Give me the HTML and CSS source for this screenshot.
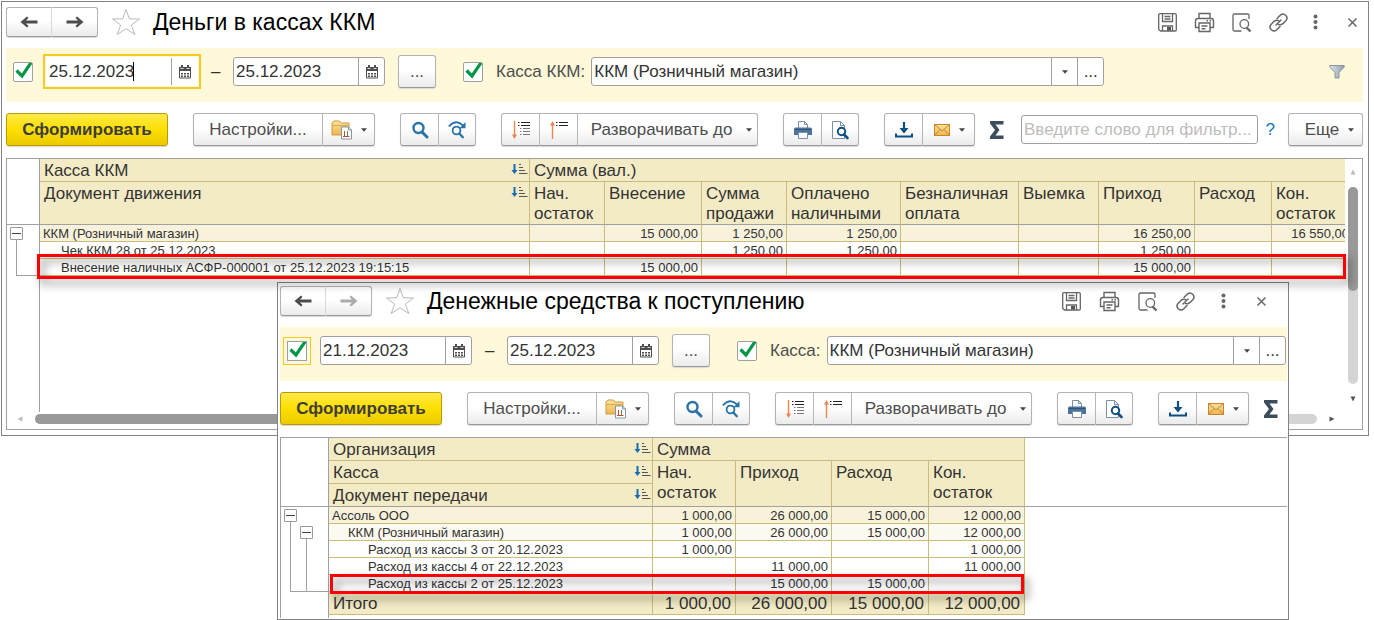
FILE: index.html
```html
<!DOCTYPE html>
<html lang="ru">
<head>
<meta charset="utf-8">
<title>Деньги в кассах ККМ</title>
<link rel="stylesheet" href="styles.css">
</head>
<body>
<svg class="sprite" aria-hidden="true">
  <defs>
    <linearGradient id="gold" x1="0" y1="0" x2="0" y2="1"><stop offset="0" stop-color="#fbe3a0"/><stop offset="1" stop-color="#eeb64c"/></linearGradient>
    <linearGradient id="steel" x1="0" y1="0" x2="1" y2="0"><stop offset="0" stop-color="#dfe5ea"/><stop offset="1" stop-color="#8f9dab"/></linearGradient>
  </defs>
  <symbol id="back" viewBox="0 0 18 12"><path d="M.5 6L7 .5L8.500 2L6 4.500H17.500V7.500H6L8.500 10L7 11.500Z" fill="currentColor"/></symbol>
  <symbol id="forward" viewBox="0 0 18 12"><path d="M17.500 6L11 .5L9.500 2L12 4.500H.5V7.500H12L9.500 10L11 11.500Z" fill="currentColor"/></symbol>
  <symbol id="star" viewBox="0 0 30 28"><path d="M15 1.500L18.300 10.800L28.500 11L20.300 17L23.800 26.500L15 20.800L6.200 26.500L9.700 17L1.500 11L11.700 10.800Z" fill="#fff" stroke="#b4bac0"/></symbol>
  <symbol id="save" viewBox="0 0 21 21"><g fill="none" stroke="#666" stroke-width="1.300"><path d="M1.700 3Q1.700 1.700 3 1.700H18Q19.300 1.700 19.300 3V18Q19.300 19 18 19H3.500L1.700 17.500Z"/><path d="M5.500 2V9.500H15.500V2M7.500 4.500H13.500M7.500 7H13.500M5.500 19V14H15.500V19"/></g><path d="M10 15H14V18.500H10Z" fill="#555"/></symbol>
  <symbol id="print" viewBox="0 0 21 21"><g fill="none" stroke="#666" stroke-width="1.400"><path d="M5 6V1.500H16V6"/><path d="M5 15.500H1.500V9Q1.500 6.500 4 6.500H17Q19.500 6.500 19.500 9V15.500H16"/><path d="M5 11H16V19.500H5ZM7.500 14H13.500M7.500 16.800H11.500M12.500 8.700H14M15.500 8.700H17"/></g></symbol>
  <symbol id="preview" viewBox="0 0 21 21"><g fill="none" stroke="#666" stroke-width="1.300"><path d="M18 7V3.500Q18 2 16.500 2H3.500Q2 2 2 3.500V17.500Q2 19 3.500 19H10.500"/><circle cx="13.300" cy="12" r="4.300"/><path d="M15.500 15.500L19.500 19.500" stroke-width="2.400"/></g></symbol>
  <symbol id="link" viewBox="0 0 21 21"><g fill="none" stroke="#666" stroke-width="1.500" stroke-linecap="round"><path d="M9 6.500L12.500 3Q15 .8 17.700 3.300Q20.200 6 18 8.500L14.800 11.700Q12.500 13.500 10.300 12.300"/><path d="M12 14.500L8.500 18Q6 20.200 3.300 17.700Q.8 15 3 12.500L6.200 9.300Q8.500 7.500 10.700 8.700"/><path d="M8 13L13 8"/></g></symbol>
  <symbol id="dots" viewBox="0 0 21 21"><g fill="#666"><circle cx="10.500" cy="4.500" r="2"/><circle cx="10.500" cy="10" r="2"/><circle cx="10.500" cy="15.500" r="2"/></g></symbol>
  <symbol id="close" viewBox="0 0 21 21"><path d="M6.500 6.500L14.500 14.500M14.500 6.500L6.500 14.500" stroke="#666" stroke-width="1.500"/></symbol>
  <symbol id="calendar" viewBox="0 0 14 14"><path d="M1.500 3H12.500V13H1.500Z" fill="#fff" stroke="#4d4d4d"/><path d="M1 2H13V6H1Z" fill="#4d4d4d"/><path d="M3 0H5V3H3ZM9 0H11V3H9Z" fill="#4d4d4d"/><path d="M2.500 3.500H5.500M8.500 3.500H11.500" stroke="#ddd"/><path d="M3 8H5V9.500H3ZM6 8H8V9.500H6ZM9 8H11V9.500H9ZM3 10.500H5V12H3ZM6 10.500H8V12H6ZM9 10.500H11V12H9Z" fill="#4d4d4d"/></symbol>
  <symbol id="funnel" viewBox="0 0 16 16"><path d="M.8 1.500H15.200V3L10 8.500V14H6V8.500L.8 3Z" fill="url(#steel)" stroke="#8794a1"/></symbol>
  <symbol id="folder" viewBox="0 0 22 20"><path d="M1 15V3L3 1H8.500L10 3H18V15Z" fill="url(#gold)" stroke="#cf9a3b"/><path d="M1.500 5.500H17.500" stroke="#dba94d"/><path d="M10.500 7H17.500L20.500 10V19H10.500Z" fill="#fff" stroke="#8795a5"/><path d="M17.500 7V10H20.500" fill="none" stroke="#8795a5"/><path d="M13.500 11V16.500" stroke="#cf4632"/><path d="M16.500 11V16.500" stroke="#3f9a55"/><path d="M12 16.500H18.500" stroke="#cf4632"/></symbol>
  <symbol id="search" viewBox="0 0 18 18"><circle cx="7.500" cy="7" r="5" fill="none" stroke="#2a72a8" stroke-width="2.400"/><path d="M11 11L16 16" stroke="#2a72a8" stroke-width="3" stroke-linecap="round"/></symbol>
  <symbol id="research" viewBox="0 0 18 18"><path d="M.8 5.500Q8 -2.500 15 4.500" fill="none" stroke="#2a72a8" stroke-width="1.800"/><path d="M17.500 1V7.200H11.500Z" fill="#2a72a8"/><circle cx="8.500" cy="9.500" r="3.900" fill="none" stroke="#2a72a8" stroke-width="1.800"/><path d="M11.300 12.500L14.800 16.200" stroke="#2a72a8" stroke-width="2.400" stroke-linecap="round"/></symbol>
  <symbol id="expand" viewBox="0 0 20 20"><path d="M3.500 1V17" stroke="#f08452" stroke-width="1.400"/><path d="M1 14.500H6L3.500 19Z" fill="#f08452"/><path d="M7 2.500H8.500M10 2.500H19M7 5.500H8.500M10 5.500H19" stroke="#222"/><path d="M9 8.500H10.500M12 8.500H19M9 11.500H10.500M12 11.500H19M9 14.500H10.500M12 14.500H19" stroke="#777"/></symbol>
  <symbol id="collapse" viewBox="0 0 20 20"><path d="M3.500 3V19" stroke="#f08452" stroke-width="1.400"/><path d="M1 5.500H6L3.500 1Z" fill="#f08452"/><path d="M7 2.500H8.500M10 2.500H19M7 5.500H8.500M10 5.500H19" stroke="#222"/></symbol>
  <symbol id="printer" viewBox="0 0 20 20"><path d="M5.500 8V1.500H11.500L14.500 4.500V8" fill="#fff" stroke="#7b8fa5"/><path d="M11.500 1.500V4.500H14.500" fill="none" stroke="#7b8fa5"/><path d="M2.500 7.500H17.500Q19 7.500 19 9V15H1V9Q1 7.500 2.500 7.500Z" fill="#4c739c"/><path d="M2 9.500H18" stroke="#2f5379"/><path d="M5.500 12.500H14.500V18.500H5.500Z" fill="#fff" stroke="#7b8fa5"/></symbol>
  <symbol id="lookup" viewBox="0 0 20 20"><path d="M2.500 1.500H10.500L14.500 5.500V18.500H2.500Z" fill="#fff" stroke="#7b8fa5"/><path d="M10.500 1.500V5.500H14.500" fill="none" stroke="#7b8fa5"/><circle cx="11.500" cy="11.500" r="3.700" fill="#fff" stroke="#0d5083" stroke-width="2"/><path d="M14 14.500L17.500 18" stroke="#0d5083" stroke-width="2.600" stroke-linecap="round"/></symbol>
  <symbol id="download" viewBox="0 0 20 18"><path d="M10 1V10" stroke="#0d4f82" stroke-width="2.200"/><path d="M5.500 7L10 12.500L14.500 7Z" fill="#0d4f82"/><path d="M2 12.500V15.500H18V12.500" fill="none" stroke="#0d4f82" stroke-width="2"/></symbol>
  <symbol id="mail" viewBox="0 0 18 14"><rect x="1.500" y="1.500" width="15" height="11" fill="url(#gold)" stroke="#c9862a"/><path d="M1.500 1.500L9 8L16.500 1.500M1.500 12.500L7 6.500M16.500 12.500L11 6.500" fill="none" stroke="#c9862a"/></symbol>
  <symbol id="sigma" viewBox="0 0 18 20"><path d="M2 1H15.500V4.500H7.500L11.500 10L7.500 15.500H15.500V19H2V16.500L7 10L2 3.500Z" fill="#3c4d5c"/></symbol>
  <symbol id="caret" viewBox="0 0 7 4"><path d="M0 0H7L3.500 4Z" fill="#444"/></symbol>
  <symbol id="sort" viewBox="0 0 17 12"><path d="M3.500 0V7" stroke="#176db4" stroke-width="2"/><path d="M.5 6H6.500L3.500 10Z" fill="#176db4"/><path d="M8 .5H10M8 3.500H12M8 6.500H14M8 9.500H16.500" stroke="#555"/></symbol>
  <symbol id="triangle" viewBox="0 0 6 6"><path d="M3 .5L5.500 5.500H.5Z" fill="currentColor"/></symbol>
</svg>

<main class="desktop">
<section class="window window-cash" aria-label="Деньги в кассах ККМ">
  <header class="titlebar">
    <div class="group nav">
      <button class="btn" aria-label="Назад"><svg class="i-arrow"><use href="#back"/></svg></button>
      <button class="btn" aria-label="Вперед"><svg class="i-arrow"><use href="#forward"/></svg></button>
    </div>
    <button class="plain star" aria-label="В избранное"><svg class="i-star"><use href="#star"/></svg></button>
    <h1>Деньги в кассах ККМ</h1>
    <div class="window-tools">
      <button class="plain" aria-label="Сохранить"><svg><use href="#save"/></svg></button>
      <button class="plain" aria-label="Печать"><svg><use href="#print"/></svg></button>
      <button class="plain" aria-label="Просмотр"><svg><use href="#preview"/></svg></button>
      <button class="plain" aria-label="Ссылка"><svg><use href="#link"/></svg></button>
      <button class="plain" aria-label="Меню"><svg><use href="#dots"/></svg></button>
      <button class="plain" aria-label="Закрыть"><svg><use href="#close"/></svg></button>
    </div>
  </header>

  <form class="filters">
    <input type="checkbox" class="check" checked aria-label="Период">
    <div class="field date focused">
      <input type="text" value="25.12.2023" aria-label="Начало периода"><i class="text-caret"></i>
      <button type="button" aria-label="Календарь"><svg class="i-cal"><use href="#calendar"/></svg></button>
    </div>
    <span class="dash">–</span>
    <div class="field date">
      <input type="text" value="25.12.2023" aria-label="Конец периода">
      <button type="button" aria-label="Календарь"><svg class="i-cal"><use href="#calendar"/></svg></button>
    </div>
    <button type="button" class="btn period">...</button>
    <input type="checkbox" class="check second" id="use-cash" checked>
    <label for="use-cash">Касса ККМ:</label>
    <div class="field combo">
      <select aria-label="Касса ККМ"><option>ККМ (Розничный магазин)</option></select>
      <span class="drop"><svg class="i-caret"><use href="#caret"/></svg></span>
      <button type="button">...</button>
    </div>
    <button type="button" class="plain funnel" aria-label="Отбор"><svg><use href="#funnel"/></svg></button>
  </form>

  <div class="toolbar">
    <button class="btn primary">Сформировать</button>
    <div class="group">
      <button class="btn settings">Настройки...</button>
      <button class="btn split" aria-label="Варианты"><svg class="i-folder"><use href="#folder"/></svg><svg class="i-caret"><use href="#caret"/></svg></button>
    </div>
    <div class="group">
      <button class="btn icon" aria-label="Найти"><svg class="i-18"><use href="#search"/></svg></button>
      <button class="btn icon" aria-label="Найти далее"><svg class="i-18"><use href="#research"/></svg></button>
    </div>
    <div class="group">
      <button class="btn icon" aria-label="Развернуть"><svg class="i-20"><use href="#expand"/></svg></button>
      <button class="btn icon" aria-label="Свернуть"><svg class="i-20"><use href="#collapse"/></svg></button>
      <button class="btn unfold">Разворачивать до<svg class="i-caret"><use href="#caret"/></svg></button>
    </div>
    <div class="group">
      <button class="btn icon" aria-label="Печать"><svg class="i-20"><use href="#printer"/></svg></button>
      <button class="btn icon" aria-label="Предварительный просмотр"><svg class="i-20"><use href="#lookup"/></svg></button>
    </div>
    <div class="group">
      <button class="btn icon" aria-label="Сохранить"><svg class="i-20"><use href="#download"/></svg></button>
      <button class="btn split" aria-label="Отправить"><svg class="i-18"><use href="#mail"/></svg><svg class="i-caret"><use href="#caret"/></svg></button>
    </div>
    <div class="tail">
      <button class="plain" aria-label="Сумма"><svg class="i-sigma"><use href="#sigma"/></svg></button>
      <input type="text" class="search" placeholder="Введите слово для фильтр..." aria-label="Фильтр">
      <a class="help" href="#">?</a>
      <button class="btn more">Еще<svg class="i-caret"><use href="#caret"/></svg></button>
    </div>
  </div>

  <div class="report">
    <div class="sheet">
      <div class="gutter">
        <div class="gutter-head"></div>
        <div class="node"><button class="toggle" aria-label="Свернуть группу"></button><div class="stem"></div></div>
      </div>
      <div class="clip">
        <table>
          <colgroup><col><col class="w75"><col class="w97"><col class="w85"><col class="w114"><col class="w118"><col class="w80"><col class="w96"><col class="w77"><col class="w81"></colgroup>
          <thead>
            <tr class="one"><th><span class="sortable">Касса ККМ<svg class="i-sort"><use href="#sort"/></svg></span></th><th colspan="9">Сумма (вал.)</th></tr>
            <tr class="two"><th><span class="sortable">Документ движения<svg class="i-sort"><use href="#sort"/></svg></span></th><th>Нач.<br>остаток</th><th>Внесение</th><th>Сумма<br>продажи</th><th>Оплачено<br>наличными</th><th>Безналичная<br>оплата</th><th>Выемка</th><th>Приход</th><th>Расход</th><th>Кон.<br>остаток</th></tr>
          </thead>
          <tbody>
            <tr class="level1"><td>ККМ (Розничный магазин)</td><td></td><td>15 000,00</td><td>1 250,00</td><td>1 250,00</td><td></td><td></td><td>16 250,00</td><td></td><td>16 550,00</td></tr>
            <tr><td class="indent1">Чек ККМ 28 от 25.12.2023</td><td></td><td></td><td>1 250,00</td><td>1 250,00</td><td></td><td></td><td>1 250,00</td><td></td><td></td></tr>
            <tr><td class="indent1">Внесение наличных АСФР-000001 от 25.12.2023 19:15:15</td><td></td><td>15 000,00</td><td></td><td></td><td></td><td></td><td>15 000,00</td><td></td><td></td></tr>
          </tbody>
        </table>
      </div>
    </div>
    <div class="vscroll"><svg class="tri pale"><use href="#triangle"/></svg><div class="track"><div class="thumb"></div></div><svg class="tri down"><use href="#triangle"/></svg></div>
    <div class="hscroll"><svg class="tri left pale"><use href="#triangle"/></svg><div class="track"><div class="thumb"></div></div><svg class="tri right"><use href="#triangle"/></svg></div>
    <div class="mark"></div>
  </div>
</section>

<section class="window window-due" aria-label="Денежные средства к поступлению">
  <header class="titlebar">
    <div class="group nav">
      <button class="btn" aria-label="Назад"><svg class="i-arrow"><use href="#back"/></svg></button>
      <button class="btn" aria-label="Вперед" disabled><svg class="i-arrow"><use href="#forward"/></svg></button>
    </div>
    <button class="plain star" aria-label="В избранное"><svg class="i-star"><use href="#star"/></svg></button>
    <h1>Денежные средства к поступлению</h1>
    <div class="window-tools">
      <button class="plain" aria-label="Сохранить"><svg><use href="#save"/></svg></button>
      <button class="plain" aria-label="Печать"><svg><use href="#print"/></svg></button>
      <button class="plain" aria-label="Просмотр"><svg><use href="#preview"/></svg></button>
      <button class="plain" aria-label="Ссылка"><svg><use href="#link"/></svg></button>
      <button class="plain" aria-label="Меню"><svg><use href="#dots"/></svg></button>
      <button class="plain" aria-label="Закрыть"><svg><use href="#close"/></svg></button>
    </div>
  </header>

  <form class="filters">
    <input type="checkbox" class="check ringed" checked aria-label="Период">
    <div class="field date">
      <input type="text" value="21.12.2023" aria-label="Начало периода">
      <button type="button" aria-label="Календарь"><svg class="i-cal"><use href="#calendar"/></svg></button>
    </div>
    <span class="dash">–</span>
    <div class="field date">
      <input type="text" value="25.12.2023" aria-label="Конец периода">
      <button type="button" aria-label="Календарь"><svg class="i-cal"><use href="#calendar"/></svg></button>
    </div>
    <button type="button" class="btn period">...</button>
    <input type="checkbox" class="check second" id="use-due" checked>
    <label for="use-due">Касса:</label>
    <div class="field combo">
      <select aria-label="Касса"><option>ККМ (Розничный магазин)</option></select>
      <span class="drop"><svg class="i-caret"><use href="#caret"/></svg></span>
      <button type="button">...</button>
    </div>
  </form>

  <div class="toolbar">
    <button class="btn primary">Сформировать</button>
    <div class="group">
      <button class="btn settings">Настройки...</button>
      <button class="btn split" aria-label="Варианты"><svg class="i-folder"><use href="#folder"/></svg><svg class="i-caret"><use href="#caret"/></svg></button>
    </div>
    <div class="group">
      <button class="btn icon" aria-label="Найти"><svg class="i-18"><use href="#search"/></svg></button>
      <button class="btn icon" aria-label="Найти далее"><svg class="i-18"><use href="#research"/></svg></button>
    </div>
    <div class="group">
      <button class="btn icon" aria-label="Развернуть"><svg class="i-20"><use href="#expand"/></svg></button>
      <button class="btn icon" aria-label="Свернуть"><svg class="i-20"><use href="#collapse"/></svg></button>
      <button class="btn unfold">Разворачивать до<svg class="i-caret"><use href="#caret"/></svg></button>
    </div>
    <div class="group">
      <button class="btn icon" aria-label="Печать"><svg class="i-20"><use href="#printer"/></svg></button>
      <button class="btn icon" aria-label="Предварительный просмотр"><svg class="i-20"><use href="#lookup"/></svg></button>
    </div>
    <div class="group">
      <button class="btn icon" aria-label="Сохранить"><svg class="i-20"><use href="#download"/></svg></button>
      <button class="btn split" aria-label="Отправить"><svg class="i-18"><use href="#mail"/></svg><svg class="i-caret"><use href="#caret"/></svg></button>
    </div>
    <div class="tail">
      <button class="plain" aria-label="Сумма"><svg class="i-sigma"><use href="#sigma"/></svg></button>
    </div>
  </div>

  <div class="report">
    <div class="sheet">
      <div class="gutter">
        <div class="gutter-head"></div>
        <div class="node"><button class="toggle" aria-label="Свернуть группу"></button>
          <div class="stem"><div class="node"><button class="toggle" aria-label="Свернуть группу"></button><div class="stem"></div></div></div>
        </div>
      </div>
      <table>
        <colgroup><col class="w324"><col class="w83"><col class="w96"><col class="w97"><col class="w96"></colgroup>
        <thead>
          <tr class="one"><th><span class="sortable">Организация<svg class="i-sort"><use href="#sort"/></svg></span></th><th colspan="4">Сумма</th></tr>
          <tr class="one"><th><span class="sortable">Касса<svg class="i-sort"><use href="#sort"/></svg></span></th><th rowspan="2" class="last">Нач.<br>остаток</th><th rowspan="2" class="last">Приход</th><th rowspan="2" class="last">Расход</th><th rowspan="2" class="last">Кон.<br>остаток</th></tr>
          <tr class="one"><th class="last"><span class="sortable">Документ передачи<svg class="i-sort"><use href="#sort"/></svg></span></th></tr>
        </thead>
        <tbody>
          <tr class="level1"><td>Ассоль ООО</td><td>1 000,00</td><td>26 000,00</td><td>15 000,00</td><td>12 000,00</td></tr>
          <tr class="level2"><td class="indent1">ККМ (Розничный магазин)</td><td>1 000,00</td><td>26 000,00</td><td>15 000,00</td><td>12 000,00</td></tr>
          <tr><td class="indent2">Расход из кассы 3 от 20.12.2023</td><td>1 000,00</td><td></td><td></td><td>1 000,00</td></tr>
          <tr><td class="indent2">Расход из кассы 4 от 22.12.2023</td><td></td><td>11 000,00</td><td></td><td>11 000,00</td></tr>
          <tr><td class="indent2">Расход из кассы 2 от 25.12.2023</td><td></td><td>15 000,00</td><td>15 000,00</td><td></td></tr>
        </tbody>
        <tfoot>
          <tr><td>Итого</td><td>1 000,00</td><td>26 000,00</td><td>15 000,00</td><td>12 000,00</td></tr>
        </tfoot>
      </table>
      <div class="rest"></div>
    </div>
    <div class="mark"></div>
  </div>
</section>
</main>
</body>
</html>
```
FILE: styles.css
```css
* { box-sizing: border-box; }

body {
  margin: 0;
  background: #fff;
  color: #333;
  font: 17px/20px "Liberation Sans", Arial, sans-serif;
  overflow: hidden;
}

button, input, select { font: inherit; color: inherit; margin: 0; }
svg { display: block; flex: none; }
.sprite { position: absolute; width: 0; height: 0; }

.desktop { position: relative; min-height: 100vh; }

/* Windows */
.window { position: absolute; background: #fff; border: 1px solid #828282; }
.window-cash { left: 1px; right: 5px; top: 1px; padding: 5px 5px 5px 4px; }
.window-due { left: 277px; top: 282px; width: 1012px; padding: 3px 1px 1px 2px; z-index: 1; }

.titlebar { display: flex; align-items: center; height: 41px; padding-bottom: 11px; }
.window-due .titlebar { padding-right: 15px; }
.titlebar h1 { margin: 0; padding-left: 12px; font-size: 23px; line-height: 30px; font-weight: 400; color: #000; white-space: nowrap; }
.star { margin-left: 13px; }
.window-tools { display: flex; gap: 16px; margin-left: auto; }
.window-due .window-tools { gap: 17px; }
.window-tools svg { width: 21px; height: 21px; }

.plain { display: flex; padding: 0; border: 0; background: none; }

/* Buttons */
.btn {
  display: flex;
  align-items: center;
  justify-content: center;
  height: 33px;
  padding: 0;
  border: 1px solid #b3b3b3;
  border-bottom-color: #999;
  border-radius: 3px;
  background: linear-gradient(#fff 45%, #ebebeb);
  color: #4d4d4d;
  white-space: nowrap;
  box-shadow: 0 1px 1px #d8d8d8;
}
.group { display: flex; flex: none; }
.group .btn { border-radius: 0; border-left-width: 0; }
.group .btn:first-child { border-left-width: 1px; border-radius: 3px 0 0 3px; }
.group .btn:last-child { border-radius: 0 3px 3px 0; }
.nav .btn { width: 46px; height: 30px; border-right-color: #d9d9d9; }
.nav .btn:last-child { border-right-color: #b3b3b3; }
.nav .btn:disabled { color: #aaa; }

.primary {
  width: 162px;
  border-color: #b89b00;
  background: linear-gradient(#ffe94a, #fddf00 50%, #ecca00);
  color: #3d3d3d;
  font-weight: 700;
}
.settings { width: 130px; }
.split { width: 52px; gap: 8px; }
.icon { width: 38px; }
.icon:first-child { width: 39px; }
.icon:last-child { width: 37px; }
.group .unfold { width: 180px; padding-left: 8px; gap: 14px; }
.more { width: 75px; padding-left: 8px; gap: 9px; flex: none; }
.period { width: 38px; flex: none; }

/* Icons */
.i-arrow { width: 18px; height: 12px; }
.i-star { width: 30px; height: 28px; }
.i-cal { width: 14px; height: 14px; }
.i-18 { width: 18px; height: 18px; }
.i-20 { width: 20px; height: 20px; }
.i-folder { width: 22px; height: 20px; }
.i-caret { width: 6px; height: 4px; }
.i-sigma { width: 18px; height: 20px; }
.i-sort { width: 17px; height: 12px; }

/* Filters */
.filters {
  display: flex;
  align-items: center;
  gap: 13px;
  height: 54px;
  padding: 0 18px 7px 7px;
  background: #fff9d9;
}
.window-due .filters { padding-right: 1px; }
.filters label { color: #4d4d4d; white-space: nowrap; }
.dash { width: 9px; }
.check {
  appearance: none;
  width: 20px;
  height: 20px;
  flex: none;
  border: 1px solid #a0a0a0;
  border-radius: 2px;
  background: #fff url("data:image/svg+xml,%3Csvg xmlns='http://www.w3.org/2000/svg' viewBox='0 0 20 20'%3E%3Cpath d='M3.500 8.500L9 14L18.500 0' fill='none' stroke='%23009646' stroke-width='3.200'/%3E%3C/svg%3E") center / 20px 20px no-repeat border-box;
}
.check.second { margin-left: 14px; }
.check.ringed { border-radius: 0; outline: 1px solid #f5c826; outline-offset: 3px; }

.field {
  position: relative;
  display: flex;
  height: 29px;
  border: 1px solid #a0a0a0;
  border-radius: 3px;
  background: #fff;
}
.field input, .field select {
  flex: 1;
  min-width: 0;
  padding: 0 2px;
  border: 0;
  background: none;
  appearance: none;
  outline: 0;
}
.field button, .drop {
  display: flex;
  align-items: center;
  justify-content: center;
  width: 26px;
  flex: none;
  padding: 0;
  border: 0;
  border-left: 1px solid #a0a0a0;
  background: none;
}
.date { width: 152px; flex: none; }
.field.focused { border-color: #fff; border-radius: 0; outline: 2px solid #f8c923; outline-offset: 1px; }
.text-caret { position: absolute; left: 86px; top: 4px; width: 1px; height: 19px; background: #000; }
.combo { flex: 0 1 513px; margin-left: -7px; }
.window-due .combo { flex: 1; }
.funnel { margin-left: auto; }
.funnel svg { width: 16px; height: 16px; }

/* Toolbar */
.toolbar { display: flex; align-items: center; gap: 25px; padding: 11px 0 12px; }
.primary { flex: none; }
.tail { display: flex; align-items: center; flex: 1; min-width: 0; margin-left: -12px; }
.search {
  flex: 1;
  min-width: 0;
  height: 29px;
  margin-left: 15px;
  padding: 0 2px;
  border: 1px solid #a0a0a0;
  border-radius: 3px;
  background: #fff;
}
.search::placeholder { color: #bdbdbd; opacity: 1; }
.help { padding: 0 13px 0 8px; color: #0f75bd; text-decoration: none; }

/* Report sheets */
.report { position: relative; border: 1px solid #a0a0a0; }
.window-cash .report { display: grid; grid-template-columns: minmax(0, 1fr) 17px; grid-template-rows: 253px 17px; }
.window-due .report { border-width: 1px 0 0 1px; }
.sheet { display: flex; min-width: 0; }
.window-due .sheet { min-height: 180px; }
.gutter { display: flex; flex-direction: column; width: 33px; flex: none; border-right: 1px solid #a0a0a0; }
.window-due .gutter { width: 48px; }
.gutter-head { height: 66px; flex: none; border-bottom: 1px solid #a0a0a0; }
.window-due .gutter-head, .rest { height: 69px; }
.rest { flex: 1; border-bottom: 1px solid #a0a0a0; }
.clip { flex: 1; min-width: 0; overflow: hidden; }

.node { display: flex; flex-direction: column; height: 51px; padding: 2px 0 0 3px; }
.window-due .node { height: 85px; }
.window-due .node .node { height: 100%; padding: 4px 0 0 9px; }
.toggle {
  width: 13px;
  height: 13px;
  flex: none;
  padding: 0;
  border: 1px solid #999;
  border-radius: 1px;
  background: linear-gradient(#444, #444) center / 9px 1px no-repeat #fff;
}
.stem { flex: 1; min-height: 0; margin-left: 6px; border: 1px solid #a0a0a0; border-width: 0 0 1px 1px; }
.stem .stem { border-bottom: 0; }

table { table-layout: fixed; border-collapse: separate; border-spacing: 0; font-size: 13px; line-height: 15px; }
.clip table { width: calc(100% + 8px); }
.window-due table { width: 696px; flex: none; align-self: flex-start; }
th, td { border: 0 solid #c9bc7c; border-width: 0 1px 1px 0; white-space: nowrap; }
th { padding: 2px 4px 0; background: #f3ebc5; font-size: 17px; line-height: 20px; font-weight: 400; text-align: left; vertical-align: top; }
.one { height: 23px; }
.two { height: 43px; }
.two th, th.last { border-bottom-color: #a0a0a0; }
td { height: 17px; padding: 1px 3px 0; text-align: right; }
td:first-child { text-align: left; }
.level1 td { background: #f9f2db; }
.level2 td { background: #fcf9ee; }
.window-cash .indent1 { padding-left: 21px; }
.window-due .indent1 { padding-left: 19px; }
td.indent2 { padding-left: 39px; }
tfoot td { height: 23px; padding: 2px 4px 0; background: #f3ebc5; font-size: 17px; line-height: 20px; }
.sortable { display: flex; justify-content: space-between; }
.sortable svg { margin: 3px -3px 0 0; }

.w75 { width: 75px; } .w77 { width: 77px; } .w80 { width: 80px; } .w81 { width: 81px; }
.w83 { width: 83px; } .w85 { width: 85px; } .w96 { width: 96px; } .w97 { width: 97px; }
.w114 { width: 114px; } .w118 { width: 118px; } .w324 { width: 324px; }

/* Scroll bars */
.vscroll, .hscroll { display: flex; align-items: center; }
.vscroll { flex-direction: column; padding: 10px 2px 10px 0; gap: 12px; }
.hscroll { padding: 0 10px 4px; gap: 12px; }
.track { flex: 1; border-radius: 5px; background: #d4d4d4; }
.vscroll .track { width: 10px; }
.hscroll .track { height: 10px; }
.thumb { border-radius: 5px; background: #999; }
.vscroll .thumb { height: 53%; }
.hscroll .thumb { height: 10px; width: 85%; }
.tri { width: 6px; height: 6px; color: #555; }
.tri.pale { color: #bbb; }
.down { transform: rotate(180deg); }
.left { transform: rotate(-90deg); }
.right { transform: rotate(90deg); }

/* Frames that point out a row */
.mark { position: absolute; z-index: 2; border: 3px solid #f00; filter: drop-shadow(4px 5px 4px rgba(0, 0, 0, .5)); pointer-events: none; }
.window-cash .mark { left: 30px; right: 16px; top: 95px; height: 25px; }
.window-due .mark { left: 49px; top: 136px; width: 694px; height: 20px; }
```
